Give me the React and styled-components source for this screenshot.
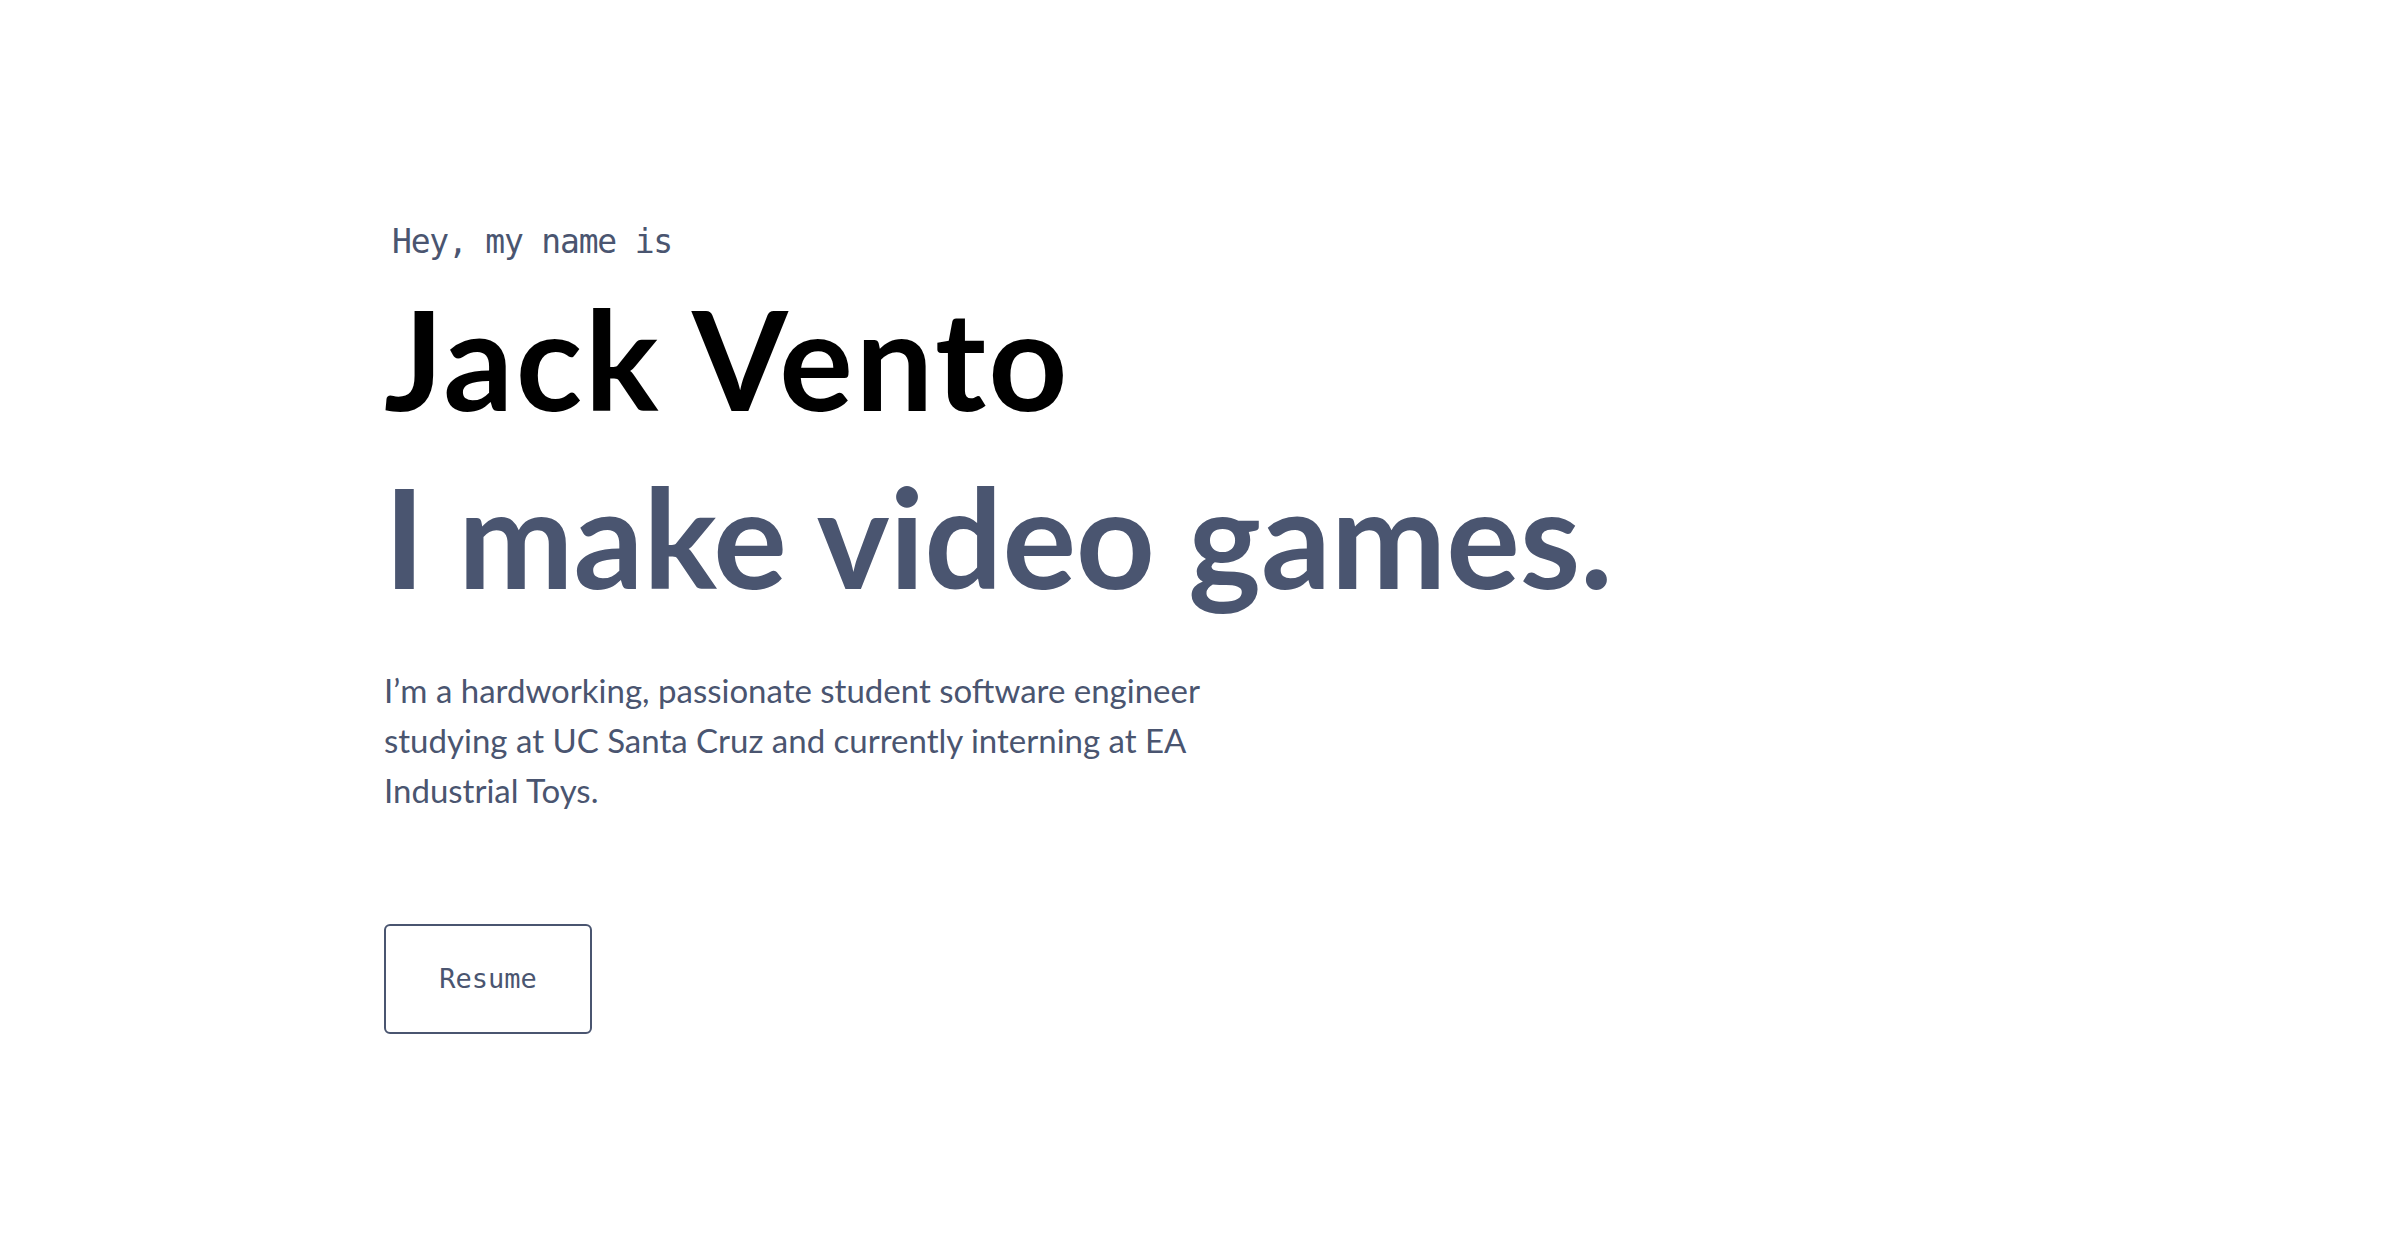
import React from "react";
import styled, { createGlobalStyle } from "styled-components";

const GlobalStyle = createGlobalStyle`
    html, body {
        margin: 0;
        padding: 0;
        background: #ffffff;
    }
    * {
        box-sizing: border-box;
    }
`

const Hero = styled.section`
    min-height: 1260px;
    display: flex;
    flex-direction: column;
    align-items: flex-start;
    padding: 222px 0 0 384px;
    background: #ffffff;
`

const Greeting = styled.h1`
    margin: 0 0 21px 8px;
    font-family: "DejaVu Sans Mono", "Liberation Mono", monospace;
    font-size: 33px;
    font-weight: 400;
    letter-spacing: -1.2px;
    color: #4a5570;
`

const BigHeading = styled.h2`
    margin: ${({ sub }) => (sub ? "26px 0 0" : "0")};
    font-family: Lato, "Liberation Sans", sans-serif;
    font-size: 138px;
    font-weight: 700;
    line-height: 1.1;
    letter-spacing: ${({ sub }) => (sub ? "-0.2px" : "2.5px")};
    color: ${({ sub }) => (sub ? "#4a5570" : "#000000")};
`

const Blurb = styled.p`
    margin: 53px 0 0;
    max-width: 860px;
    font-family: Lato, "Liberation Sans", sans-serif;
    font-size: 33px;
    line-height: 50px;
    color: #4a5570;
`

const ResumeButton = styled.a`
    margin-top: 109px;
    width: 208px;
    height: 110px;
    display: flex;
    align-items: center;
    justify-content: center;
    border: 2px solid #4a5570;
    border-radius: 6px;
    font-family: "DejaVu Sans Mono", "Liberation Mono", monospace;
    font-size: 27px;
    color: #4a5570;
    text-decoration: none;
    cursor: pointer;
`

const App = () => {
    return (
        <>
            <GlobalStyle />
            <Hero>
                <Greeting>Hey, my name is</Greeting>
                <BigHeading>Jack Vento</BigHeading>
                <BigHeading sub>I make video games.</BigHeading>
                <Blurb>
                    I’m a hardworking, passionate student software engineer studying at UC Santa Cruz and currently interning at EA Industrial Toys.
                </Blurb>
                <ResumeButton href="#resume">Resume</ResumeButton>
            </Hero>
        </>
    )
}

export default App
